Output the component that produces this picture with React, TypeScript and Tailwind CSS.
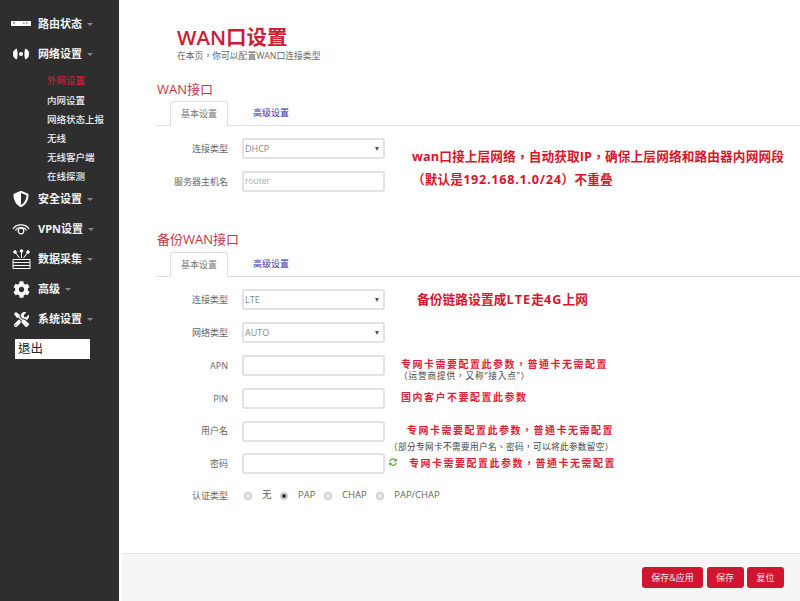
import React from "react";
import { FaCog, FaShieldAlt, FaTools, FaSyncAlt } from "react-icons/fa";

const font = { fontFamily: '"Open Sans","Noto Sans CJK TC",sans-serif' };

function RouterIcon() {
  return (
    <svg width="20" height="8" viewBox="0 0 20 8">
      <rect x="0" y="1" width="20" height="5" fill="#fff" />
      <rect x="2" y="2.5" width="2" height="1" fill="#555" />
      <rect x="12" y="2.5" width="1.5" height="1" fill="#555" />
      <rect x="15" y="2.5" width="1.5" height="1" fill="#555" />
    </svg>
  );
}
function BroadcastIcon() {
  return (
    <svg width="18" height="12" viewBox="0 0 18 12" fill="#fff">
      <path d="M4.500 0.500C1.500 2 1 4 1 6s.5 4 3.500 5.500C6 9 6 3 4.500 .5z" />
      <path d="M13.500 0.500c3 1.500 3.500 3.500 3.500 5.500s-.5 4-3.500 5.500c-1.500-2.500-1.500-8.500 0-11z" />
      <circle cx="9" cy="6" r="2" />
    </svg>
  );
}
function WifiIcon() {
  return (
    <svg width="18" height="14" viewBox="0 0 18 14" fill="none" stroke="#fff" strokeWidth="1.2">
      <path d="M1 7C4 1.500 14 1.500 17 7" />
      <path d="M3.500 8.500C5.500 4.500 12.500 4.500 14.500 8.500" />
      <circle cx="9" cy="9" r="2.800" />
    </svg>
  );
}
function DataIcon() {
  return (
    <svg width="19" height="20" viewBox="0 0 19 20" fill="none" stroke="#fff" strokeWidth="1">
      <path d="M1 10.500h17M1 13.500h17M1 16.500h17M1 19.500h17M1 10.500v9M18 10.500v9" />
      <path d="M9.500 2v7M3 3l4.500 6M16 3l-4.500 6" />
      <circle cx="9.500" cy="2" r="1.300" fill="#fff" />
      <circle cx="3" cy="3" r="1.300" fill="#fff" />
      <circle cx="16" cy="3" r="1.300" fill="#fff" />
    </svg>
  );
}

function Caret({ text }: { text: string }) {
  return (
    <span className="flex items-center gap-[5px] text-[11px] font-bold text-[#f2f2f2]">
      {text}
      <span className="h-0 w-0 border-x-[3px] border-t-[3px] border-x-transparent border-t-[#888]" />
    </span>
  );
}

function NavItem({ icon, text, h = 30 }: { icon: React.ReactNode; text: string; h?: number }) {
  return (
    <div className="flex items-center" style={{ height: h }}>
      <div className="flex w-[38px] shrink-0 items-center justify-center pl-[4px]">{icon}</div>
      <Caret text={text} />
    </div>
  );
}

function Tabs() {
  return (
    <div className="flex h-[25px] border-b border-[#e0e0e0] pl-[13px] text-[9px]">
      <div className="flex h-[25px] w-[58px] items-center justify-center rounded-t-[3px] border border-b-0 border-[#e0e0e0] bg-white text-[#777]">
        基本设置
      </div>
      <div className="ml-[25px] flex h-[24px] items-center text-[#3333aa]">高级设置</div>
    </div>
  );
}

function Row({ label, children, h = 33 }: { label: string; children: React.ReactNode; h?: number }) {
  return (
    <div className="flex items-center" style={{ height: h }}>
      <div className="w-[71px] shrink-0 text-right text-[9px] text-[#666]">{label}</div>
      <div className="ml-[14px]">{children}</div>
    </div>
  );
}

function Select({ value }: { value: string }) {
  return (
    <div className="flex h-[21px] w-[143px] items-center justify-between rounded-[3px] border-2 border-[#e2e2e2] bg-white pl-[1px] pr-[4px] text-[9px] text-[#888]">
      {value}
      <span className="h-0 w-0 border-x-[2.500px] border-t-[4px] border-x-transparent border-t-[#555]" />
    </div>
  );
}

function Input({ placeholder }: { placeholder?: string }) {
  return (
    <div className="flex h-[21px] w-[143px] items-center rounded-[3px] border-2 border-[#e2e2e2] bg-white pl-[1px] text-[8.500px] text-[#aaa]">
      {placeholder}
    </div>
  );
}

function Radio({ label, checked, gap }: { label: string; checked?: boolean; gap: number }) {
  return (
    <div className="flex items-center text-[9.500px] text-[#666]" style={{ marginRight: gap }}>
      <span className="mr-[10px] flex h-[8px] w-[8px] items-center justify-center rounded-full border border-[#bbb] bg-[#e8e8e8]">
        {checked && <span className="h-[4px] w-[4px] rounded-full bg-[#333]" />}
      </span>
      {label}
    </div>
  );
}

function Note({ x, y, children, cls }: { x: number; y: number; children: React.ReactNode; cls: string }) {
  return (
    <div className={`absolute whitespace-nowrap [text-spacing-trim:space-all] ${cls}`} style={{ left: x, top: y }}>
      {children}
    </div>
  );
}

const big = "text-[12.700px] font-bold tracking-[0.1px] text-[#d8152c]";
const red = "text-[10px] font-bold tracking-[1.500px] text-[#e01f3a]";
const small = "text-[8.600px] text-[#444]";

export default function App() {
  return (
    <div className="relative flex h-[601px] w-[800px] overflow-hidden bg-white" style={font}>
      <aside className="h-full w-[119px] shrink-0 bg-[#2e2e2e] pt-[9px]">
        <NavItem icon={<RouterIcon />} text="路由状态" />
        <NavItem icon={<BroadcastIcon />} text="网络设置" />
        <div className="-mb-[3px] flex flex-col pl-[47px] pt-[3px] text-[9.500px] font-medium text-[#eee]">
          <div className="flex h-[19.200px] items-center text-[#c8203c]">外网设置</div>
          <div className="flex h-[19.200px] items-center">内网设置</div>
          <div className="flex h-[19.200px] items-center">网络状态上报</div>
          <div className="flex h-[19.200px] items-center">无线</div>
          <div className="flex h-[19.200px] items-center">无线客户端</div>
          <div className="flex h-[19.200px] items-center">在线探测</div>
        </div>
        <NavItem icon={<FaShieldAlt size={16} color="#fff" />} text="安全设置" />
        <NavItem icon={<WifiIcon />} text="VPN设置" />
        <NavItem icon={<DataIcon />} text="数据采集" />
        <NavItem icon={<FaCog size={17} color="#fff" />} text="高级" />
        <NavItem icon={<FaTools size={15} color="#fff" />} text="系统设置" />
        <div className="ml-[15px] mt-[5px] flex h-[20px] w-[75px] items-center bg-white pl-[3px] text-[12.500px] text-[#222]">
          退出
        </div>
      </aside>

      <main className="relative flex h-full flex-1 flex-col pl-[3px]">
        <div className="flex-1 pl-[35px]">
          <div className="pl-[20px] pt-[23px]">
            <h1 className="text-[20.500px] font-semibold leading-[28px] text-[#cc1d35]">WAN口设置</h1>
            <p className="text-[8.800px] leading-[11px] text-[#666]">在本页，你可以配置WAN口连接类型</p>
          </div>
          <h2 className="mt-[17px] text-[13px] leading-[20px] text-[#c8324a]">WAN接口</h2>
          <div className="mt-[2px]">
            <Tabs />
          </div>
          <div className="pt-[6px]">
            <Row label="连接类型"><Select value="DHCP" /></Row>
            <Row label="服务器主机名"><Input placeholder="router" /></Row>
          </div>
          <h2 className="mt-[31px] text-[13px] leading-[20px] text-[#c8324a]">备份WAN接口</h2>
          <div className="mt-[3px]">
            <Tabs />
          </div>
          <div className="pt-[6px]">
            <Row label="连接类型"><Select value="LTE" /></Row>
            <Row label="网络类型"><Select value="AUTO" /></Row>
            <Row label="APN"><Input /></Row>
            <Row label="PIN"><Input /></Row>
            <Row label="用户名" h={32}><Input /></Row>
            <Row label="密码"><Input /></Row>
            <Row label="认证类型" h={31}>
              <div className="ml-[2px] flex items-center">
                <Radio label="无" gap={8.5} />
                <Radio label="PAP" checked gap={8.5} />
                <Radio label="CHAP" gap={9.5} />
                <Radio label="PAP/CHAP" gap={0} />
              </div>
            </Row>
          </div>
        </div>
        <footer className="flex h-[48px] items-center justify-end gap-[3.500px] border-t border-[#e4e4e4] bg-[#f5f5f5] pr-[16px] text-[9px] text-[#f4e4e6]">
          <div className="flex h-[21px] w-[61px] items-center justify-center rounded-[3px] bg-[#cf1530]">保存&amp;应用</div>
          <div className="flex h-[21px] w-[37px] items-center justify-center rounded-[3px] bg-[#cf1530]">保存</div>
          <div className="flex h-[21px] w-[37px] items-center justify-center rounded-[3px] bg-[#cf1530]">复位</div>
        </footer>
      </main>

      <Note x={412} y={147} cls={big}>wan口接上层网络，自动获取IP，确保上层网络和路由器内网网段</Note>
      <Note x={412} y={170} cls={big}>（默认是<span className="tracking-[0.7px]">192.168.1.0/24</span>）不重叠</Note>
      <Note x={417} y={290} cls={big}>备份链路设置成<span className="tracking-[1px]">LTE</span>走<span className="tracking-[1px]">4G</span>上网</Note>
      <Note x={401} y={357} cls={red}>专网卡需要配置此参数，普通卡无需配置</Note>
      <Note x={399} y={370} cls={`${small} tracking-[0.900px]`}>（运营商提供，又称“接入点”）</Note>
      <Note x={401} y={390} cls={red}>国内客户不要配置此参数</Note>
      <Note x={407} y={423} cls={red}>专网卡需要配置此参数，普通卡无需配置</Note>
      <Note x={389} y={441} cls={`${small} tracking-[0.400px]`}>（部分专网卡不需要用户名、密码，可以将此参数留空）</Note>
      <Note x={409} y={456} cls={red}>专网卡需要配置此参数，普通卡无需配置</Note>
      <div className="absolute left-[389px] top-[458px] text-[#5ca83a]">
        <FaSyncAlt size={8} />
      </div>
    </div>
  );
}
